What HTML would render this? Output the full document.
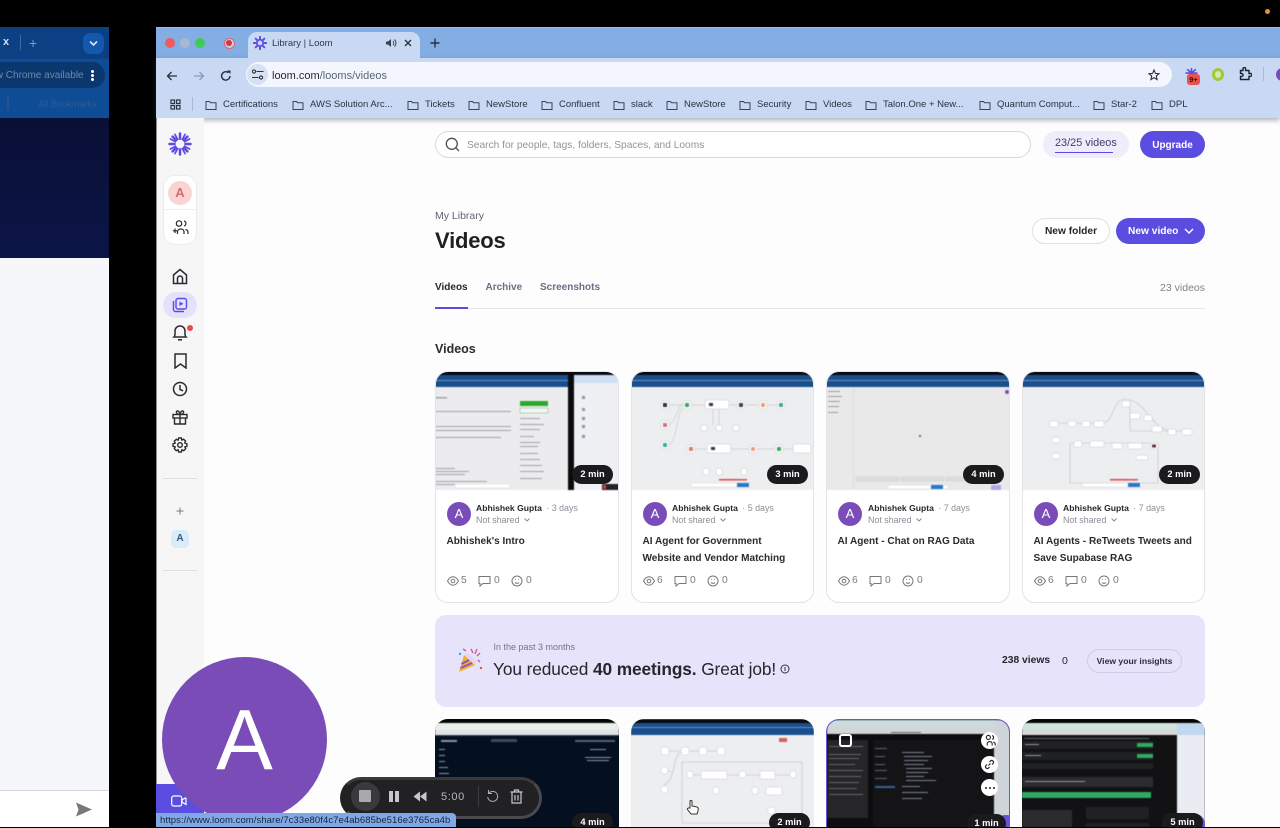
<!DOCTYPE html>
<html><head><meta charset="utf-8"><style>
*{box-sizing:border-box}
html,body{margin:0;padding:0;width:1280px;height:827px;overflow:hidden;background:#000;font-family:"Liberation Sans",sans-serif}
.a,.t,svg.i{position:absolute}
.t{white-space:nowrap;line-height:1}
.bm{position:absolute;top:99px;height:12px;font-size:9.5px;line-height:12px;color:#2a3242;padding-left:18px;white-space:nowrap}
.bm svg{position:absolute;left:0;top:0}
.card{position:absolute;top:371px;width:184px;height:232px;background:#fff;border:1px solid #e3e3e8;border-radius:13px;overflow:hidden}
.th{position:absolute;left:-1px;top:-1px;width:184px;height:119px;overflow:hidden;display:block;filter:blur(.45px)}
.blur{filter:blur(.45px);display:block}
.dur{position:absolute;background:#1b1b1e;color:#fff;font-size:9.3px;font-weight:bold;border-radius:10px;height:19px;line-height:19px;text-align:center;width:41px}
.av{position:absolute;width:24px;height:24px;border-radius:50%;background:#7a4cb8;color:#fff;font-size:13px;line-height:24px;text-align:center}
.nm{position:absolute;font-size:8.6px;font-weight:bold;color:#27272c;white-space:nowrap}
.nm span{font-weight:normal;font-size:8.9px;color:#8d8d98;margin-left:2px}
.ns{position:absolute;font-size:8.9px;color:#8b8b96;white-space:nowrap}
.ns svg{margin-left:5px;vertical-align:1px}
.ti{position:absolute;font-size:10.05px;font-weight:bold;color:#2a2a30;line-height:16.5px;white-space:nowrap}
.st{position:absolute;font-size:10.3px;color:#7b7b86}
</style></head><body>

<!-- left window -->
<div class="a" style="left:0;top:27px;width:109px;height:800px;background:#f5f7fb;overflow:hidden">
<div class="a" style="left:0;top:0;width:109px;height:32px;background:#0b4184"></div>
<div class="a" style="left:0;top:32px;width:109px;height:59px;background:#0e4c95"></div>
<div class="a" style="left:0;top:91px;width:109px;height:140px;background:linear-gradient(180deg,#0a0f36,#0b1545)"></div>
<div class="a" style="left:0;top:35px;width:105px;height:26px;background:#0b376f;border-radius:0 13px 13px 0"></div>
<div class="t" style="left:-17px;top:43.500px;font-size:10px;color:#73899f">New Chrome available</div>
<div class="a" style="left:91px;top:43px;width:3px;height:3px;background:#fff;border-radius:50%;box-shadow:0 4px 0 #fff,0 8px 0 #fff"></div>
<div class="a" style="left:83px;top:6px;width:21px;height:21px;background:#1258ac;border-radius:7px"></div>
<svg class="i" style="left:89px;top:13px" width="9" height="7"><path d="M1 1.500l3.500 3.500L8 1.500" fill="none" stroke="#dfe8f5" stroke-width="1.600"/></svg>
<div class="t" style="left:3px;top:10px;font-size:11px;font-weight:bold;color:#d5dfee">x</div>
<div class="a" style="left:20px;top:8px;width:1px;height:15px;background:#3b6aa5"></div>
<div class="t" style="left:29px;top:9px;font-size:14px;color:#7f9cc2">+</div>
<div class="a" style="left:7px;top:69px;width:2px;height:14px;background:#24558f"></div>
<div class="t" style="left:38px;top:73px;font-size:9.2px;color:#2a5c98">All Bookmarks</div>
<div class="a" style="left:0;top:763px;width:109px;height:37px;background:#fff;border-top:1px solid #d6d6d8"></div>
<svg class="i" style="left:75px;top:775px" width="18" height="15"><path d="M1 0.500L17 7.500L1 14.500L3.500 7.500Z" fill="#77797c"/></svg>
</div>

<!-- orange dot -->
<div class="a" style="left:1265px;top:9px;width:5px;height:5px;background:#e8912d;border-radius:50%"></div>

<!-- main window -->
<div class="a" style="left:156px;top:27px;width:1124px;height:800px;background:#fdfdfe;border-left:1px solid #8a8a8a"></div>
<div class="a" style="left:156px;top:27px;width:1124px;height:31px;background:#84ade4;border-top:1px solid #9dbce6"></div>
<div class="a" style="left:156px;top:58px;width:1124px;height:60px;background:#c9d9f3;box-shadow:0 2px 5px rgba(60,70,90,.45)"></div>

<div class="a" style="left:165px;top:38px;width:10px;height:10px;border-radius:50%;background:#ee5a5e"></div>
<div class="a" style="left:180px;top:38px;width:10px;height:10px;border-radius:50%;background:#a9b8ce"></div>
<div class="a" style="left:195px;top:38px;width:10px;height:10px;border-radius:50%;background:#3ecb5a"></div>
<div class="a" style="left:223.500px;top:37.500px;width:11px;height:11px;border-radius:50%;border:1.500px solid #e0626f;background:#c9d0e8"></div>
<div class="a" style="left:226px;top:40px;width:6px;height:6px;border-radius:50%;background:#d8323f"></div>

<!-- tab -->
<div class="a" style="left:248px;top:32px;width:172px;height:30px;background:#c9d9f3;border-radius:9px 9px 0 0"></div>
<svg class="i" style="left:253px;top:36px" width="14" height="14" viewBox="0 0 24 24"><g stroke="#5d4fe0" stroke-width="3.400" stroke-linecap="round"><path d="M12 1.500V22.500M1.500 12H22.500M4.600 4.600L19.400 19.400M19.400 4.600L4.600 19.400"/></g><circle cx="12" cy="12" r="7" fill="#5d4fe0"/><circle cx="12" cy="12" r="4" fill="#c9d9f3"/></svg>
<div class="t" style="left:272px;top:38.500px;font-size:9.500px;color:#333a48">Library | Loom</div>
<svg class="i" style="left:385px;top:37px" width="12" height="12" viewBox="0 0 12 12"><path d="M1 4.500H3L6 2V10L3 7.500H1Z" fill="#3b4250"/><path d="M8 4a3 3 0 0 1 0 4M9.500 2.500a5 5 0 0 1 0 7" fill="none" stroke="#3b4250"/></svg>
<svg class="i" style="left:404px;top:39px" width="8" height="8"><path d="M1 1L7 7M7 1L1 7" stroke="#2c3340" stroke-width="1.400"/></svg>
<svg class="i" style="left:430px;top:37.500px" width="10" height="10"><path d="M5 0.500V9.500M0.500 5H9.500" stroke="#283044" stroke-width="1.400"/></svg>

<!-- toolbar -->
<svg class="i" style="left:166px;top:69.500px" width="12" height="12"><path d="M11 6H1.500M5.500 2L1.500 6L5.500 10" fill="none" stroke="#2a2f3a" stroke-width="1.300"/></svg>
<svg class="i" style="left:193px;top:69.500px" width="12" height="12"><path d="M1 6H10.500M6.500 2L10.500 6L6.500 10" fill="none" stroke="#8c9ab3" stroke-width="1.300"/></svg>
<svg class="i" style="left:220px;top:69.500px" width="12" height="12"><path d="M10 6A4.200 4.200 0 1 1 8.500 2.700" fill="none" stroke="#2a2f3a" stroke-width="1.400"/><path d="M7 0.500H10.500V4Z" fill="#2a2f3a"/></svg>
<div class="a" style="left:246px;top:62px;width:926px;height:25px;border-radius:13px;background:#f3f6fc"></div>
<div class="a" style="left:247px;top:64px;width:21px;height:21px;border-radius:50%;background:#d6e1f3"></div>
<svg class="i" style="left:251px;top:69px" width="13" height="11"><g fill="none" stroke="#2c3340" stroke-width="1.100"><circle cx="3" cy="2.500" r="1.600"/><path d="M5.500 2.500H12.500M1 8.500H7.500"/><circle cx="10" cy="8.500" r="1.600"/></g></svg>
<div class="t" style="left:272px;top:70.500px;font-size:11px;color:#1f2530">loom.com<span style="color:#5b6576">/looms/videos</span></div>
<svg class="i" style="left:1148px;top:69px" width="12" height="12" viewBox="0 0 12 12"><path d="M6 1L7.400 4.400L11 4.700L8.300 7L9.100 10.600L6 8.700L2.900 10.600L3.700 7L1 4.700L4.600 4.400Z" fill="none" stroke="#2a2f3a" stroke-width="1.100"/></svg>
<svg class="i" style="left:1185px;top:68px" width="13" height="10" viewBox="0 0 24 18"><g stroke="#5d4fe0" stroke-width="3" stroke-linecap="round"><path d="M12 1V17M2 9H22M5 3L19 15M19 3L5 15"/></g></svg>
<div class="a" style="left:1187px;top:74px;width:13px;height:11px;border-radius:3px;background:#e8534c;color:#2b0f10;font-size:7.500px;font-weight:bold;line-height:11px;text-align:center">9+</div>
<div class="a" style="left:1212px;top:68px;width:12px;height:13px;border-radius:50%;border:3px solid #a3c93a;background:#d7e8b4"></div>
<svg class="i" style="left:1238px;top:67px" width="14" height="14" viewBox="0 0 14 14"><path d="M2.500 3.500H5V1.800A1.300 1.300 0 0 1 7.600 1.800V3.500H11V6.500H12.500A1.400 1.400 0 0 1 12.500 9.300H11V12.500H2.500V9.500H3.600A1.500 1.500 0 0 0 3.600 6.500H2.500Z" fill="none" stroke="#1d222c" stroke-width="1.400"/></svg>
<div class="a" style="left:1263px;top:67px;width:1px;height:14px;background:#a7bad8"></div>
<div class="a" style="left:1276px;top:68px;width:13px;height:13px;border-radius:50%;background:#7a4cb8"></div>

<!-- bookmarks -->
<svg class="i" style="left:170px;top:99px" width="11" height="11"><g fill="none" stroke="#2f3644" stroke-width="1.200"><rect x="1" y="1" width="3.500" height="3.500"/><rect x="6.500" y="1" width="3.500" height="3.500"/><rect x="1" y="6.500" width="3.500" height="3.500"/><rect x="6.500" y="6.500" width="3.500" height="3.500"/></g></svg>
<div class="a" style="left:192px;top:97px;width:1px;height:14px;background:#a7bad8"></div>
<div class="bm" style="left:205px"><svg width="12" height="12"><path d="M1 2.500H4.500L5.500 3.700H11V10.500H1Z" fill="none" stroke="#3c4453"/></svg>Certifications</div>
<div class="bm" style="left:292px"><svg width="12" height="12"><path d="M1 2.500H4.500L5.500 3.700H11V10.500H1Z" fill="none" stroke="#3c4453"/></svg>AWS Solution Arc...</div>
<div class="bm" style="left:407px"><svg width="12" height="12"><path d="M1 2.500H4.500L5.500 3.700H11V10.500H1Z" fill="none" stroke="#3c4453"/></svg>Tickets</div>
<div class="bm" style="left:468px"><svg width="12" height="12"><path d="M1 2.500H4.500L5.500 3.700H11V10.500H1Z" fill="none" stroke="#3c4453"/></svg>NewStore</div>
<div class="bm" style="left:541px"><svg width="12" height="12"><path d="M1 2.500H4.500L5.500 3.700H11V10.500H1Z" fill="none" stroke="#3c4453"/></svg>Confluent</div>
<div class="bm" style="left:613px"><svg width="12" height="12"><path d="M1 2.500H4.500L5.500 3.700H11V10.500H1Z" fill="none" stroke="#3c4453"/></svg>slack</div>
<div class="bm" style="left:666px"><svg width="12" height="12"><path d="M1 2.500H4.500L5.500 3.700H11V10.500H1Z" fill="none" stroke="#3c4453"/></svg>NewStore</div>
<div class="bm" style="left:739px"><svg width="12" height="12"><path d="M1 2.500H4.500L5.500 3.700H11V10.500H1Z" fill="none" stroke="#3c4453"/></svg>Security</div>
<div class="bm" style="left:805px"><svg width="12" height="12"><path d="M1 2.500H4.500L5.500 3.700H11V10.500H1Z" fill="none" stroke="#3c4453"/></svg>Videos</div>
<div class="bm" style="left:865px"><svg width="12" height="12"><path d="M1 2.500H4.500L5.500 3.700H11V10.500H1Z" fill="none" stroke="#3c4453"/></svg>Talon.One + New...</div>
<div class="bm" style="left:979px"><svg width="12" height="12"><path d="M1 2.500H4.500L5.500 3.700H11V10.500H1Z" fill="none" stroke="#3c4453"/></svg>Quantum Comput...</div>
<div class="bm" style="left:1093px"><svg width="12" height="12"><path d="M1 2.500H4.500L5.500 3.700H11V10.500H1Z" fill="none" stroke="#3c4453"/></svg>Star-2</div>
<div class="bm" style="left:1151px"><svg width="12" height="12"><path d="M1 2.500H4.500L5.500 3.700H11V10.500H1Z" fill="none" stroke="#3c4453"/></svg>DPL</div>

<!-- sidebar -->
<div class="a" style="left:157px;top:118px;width:47px;height:709px;background:#f6f6f7"></div>
<svg class="i" style="left:168px;top:132px" width="24" height="24" viewBox="0 0 24 24"><g stroke="#5a4ae3" stroke-width="2.500" stroke-linecap="round"><path d="M12 1.500V22.500M1.500 12H22.500M4.600 4.600L19.400 19.400M19.400 4.600L4.600 19.400"/><path d="M7 2.500L17 21.500M17 2.500L7 21.500M2.500 7L21.500 17M21.500 7L2.500 17" stroke-width="1.800"/></g><circle cx="12" cy="12" r="4.400" fill="#f6f6f7"/></svg>
<div class="a" style="left:163px;top:175px;width:34px;height:70px;background:#fff;border:1px solid #ececef;border-radius:12px"></div>
<div class="a" style="left:164px;top:209px;width:32px;height:1px;background:#eee"></div>
<div class="a" style="left:168px;top:181px;width:24px;height:24px;border-radius:50%;background:#f8d4d2;color:#d86a68;font-size:13px;font-weight:bold;line-height:24px;text-align:center">A</div>
<svg class="i" style="left:172px;top:219px" width="17" height="17" viewBox="0 0 17 17"><g fill="none" stroke="#2a2a30" stroke-width="1.200"><circle cx="7" cy="4.500" r="2.700"/><path d="M12 2A2.600 2.600 0 0 1 12 7"/><path d="M5.500 15V12.500A3 3 0 0 1 8.500 10H9A3 3 0 0 1 12 12.500V15"/><path d="M13.500 10.500A3 3 0 0 1 16 13V15"/><path d="M3 9.500V14M0.800 11.800H5.200"/></g></svg>
<svg class="i" style="left:172px;top:268px" width="16" height="17" viewBox="0 0 16 17"><path d="M1.500 7L8 1.500L14.500 7V15.500H1.500ZM5.500 15.500V10.500A2.500 2.500 0 0 1 10.500 10.500V15.500" fill="none" stroke="#2a2a30" stroke-width="1.500"/></svg>
<div class="a" style="left:163px;top:292px;width:34px;height:26px;border-radius:13px;background:#e4e1fa"></div>
<svg class="i" style="left:172px;top:297px" width="16" height="16" viewBox="0 0 16 16"><g fill="none" stroke="#5a4ae3" stroke-width="1.400"><rect x="4" y="1.500" width="10.500" height="10.500" rx="2"/><path d="M1.500 4V12.500A2 2 0 0 0 3.500 14.500H12"/></g><path d="M7.500 4.500L11.500 6.800L7.500 9Z" fill="#5a4ae3"/></svg>
<svg class="i" style="left:172px;top:324px" width="16" height="18" viewBox="0 0 16 18"><path d="M2 13C3.500 11.500 3 9 3 7A5 5 0 0 1 13 7C13 9 12.500 11.500 14 13ZM6 15.800H10" fill="none" stroke="#2a2a30" stroke-width="1.500"/></svg>
<div class="a" style="left:187px;top:325px;width:6px;height:6px;border-radius:50%;background:#ec4a4a"></div>
<svg class="i" style="left:174px;top:353px" width="13" height="16" viewBox="0 0 13 16"><path d="M1 1H12V15L6.500 11L1 15Z" fill="none" stroke="#2a2a30" stroke-width="1.500"/></svg>
<svg class="i" style="left:172px;top:381px" width="16" height="16" viewBox="0 0 16 16"><circle cx="8" cy="8" r="6.500" fill="none" stroke="#2a2a30" stroke-width="1.500"/><path d="M8 4V8.500L11 9.800" fill="none" stroke="#2a2a30" stroke-width="1.500"/></svg>
<svg class="i" style="left:172px;top:410px" width="16" height="15" viewBox="0 0 16 15"><g fill="none" stroke="#2a2a30" stroke-width="1.400"><rect x="1" y="4.500" width="14" height="3.500"/><path d="M2.500 8V14H13.500V8M8 4.500V14M8 4.500C4 4.500 3.500 1 5.500 1S8 4.500 8 4.500C8 4.500 8.500 1 10.500 1S12 4.500 8 4.500"/></g></svg>
<svg class="i" style="left:172px;top:437px" width="16" height="16" viewBox="0 0 16 16"><g fill="none" stroke="#2a2a30" stroke-width="1.400"><circle cx="8" cy="8" r="2.300"/><path d="M6.700 1H9.300L9.800 3L11.600 2.200L13.600 4.200L12.700 6L14.900 6.700V9.300L12.900 9.900L13.700 11.700L11.700 13.700L9.900 12.800L9.300 15H6.700L6.100 12.900L4.300 13.700L2.300 11.700L3.200 9.900L1.100 9.300V6.700L3.200 6.100L2.300 4.300L4.300 2.300L6.100 3.100Z"/></g></svg>
<div class="a" style="left:163px;top:478px;width:34px;height:1px;background:#e0e0e3"></div>
<svg class="i" style="left:176px;top:507px" width="8" height="8"><path d="M4 0.500V7.500M0.500 4H7.500" stroke="#77777f" stroke-width="1"/></svg>
<div class="a" style="left:171px;top:530px;width:18px;height:18px;border-radius:5px;background:#d9ecfb;color:#3e5a72;font-size:10px;font-weight:bold;line-height:18px;text-align:center">A</div>
<div class="a" style="left:163px;top:570px;width:34px;height:1px;background:#e0e0e3"></div>

<!-- header -->
<div class="a" style="left:435px;top:131px;width:596px;height:27px;background:#fff;border:1px solid #d8d8dd;border-radius:14px"></div>
<svg class="i" style="left:445px;top:137px" width="15" height="15"><g fill="none" stroke="#4b4b55" stroke-width="1.300"><circle cx="6.800" cy="6.800" r="5.500"/><path d="M10.800 10.800L14 14"/></g></svg>
<div class="t" style="left:467px;top:141px;font-size:10.200px;color:#93939d">Search for people, tags, folders, Spaces, and Looms</div>
<div class="a" style="left:1043px;top:131px;width:86px;height:27px;background:#efedfb;border-radius:14px"></div>
<div class="t" style="left:1055px;top:138px;font-size:10.900px;color:#3f3c6a">23/25 videos</div>
<div class="a" style="left:1055px;top:151.500px;width:58px;height:1px;background:#5a4ae3"></div>
<div class="a" style="left:1140px;top:131px;width:65px;height:27px;background:#5b4de0;border-radius:14px;color:#fff;font-size:10px;font-weight:bold;line-height:30px;text-align:center">Upgrade</div>

<div class="t" style="left:435px;top:210.500px;font-size:10.500px;color:#62627a">My Library</div>
<div class="t" style="left:435px;top:230px;font-size:22px;font-weight:bold;color:#1f1f24;letter-spacing:-.2px">Videos</div>
<div class="a" style="left:1032px;top:218px;width:78px;height:26px;background:#fff;border:1px solid #dfdfe5;border-radius:13px;color:#26262c;font-size:10.200px;font-weight:bold;line-height:25.500px;text-align:center">New folder</div>
<div class="a" style="left:1116px;top:218px;width:89px;height:26px;background:#5b4de0;border-radius:13px;color:#fff;font-size:10.200px;font-weight:bold;line-height:27.500px;padding-left:12px">New video</div>
<svg class="i" style="left:1184px;top:228px" width="10" height="7"><path d="M1 1L5 5L9 1" fill="none" stroke="#fff" stroke-width="1.400"/></svg>

<div class="t" style="left:435px;top:283px;font-size:10px;font-weight:bold;color:#27272c">Videos</div>
<div class="t" style="left:485.500px;top:283px;font-size:10px;font-weight:bold;color:#6c6c85">Archive</div>
<div class="t" style="left:540px;top:283px;font-size:10px;font-weight:bold;color:#6c6c85">Screenshots</div>
<div class="t" style="right:75px;top:282.500px;font-size:10.500px;color:#82828d">23 videos</div>
<div class="a" style="left:435px;top:308px;width:770px;height:1px;background:#e6e6ea"></div>
<div class="a" style="left:435px;top:307px;width:33px;height:2px;background:#5b4de0"></div>
<div class="t" style="left:435px;top:342.500px;font-size:12.500px;font-weight:bold;color:#2a2a30">Videos</div>

<!-- card 1 -->
<div class="card" style="left:435px">
<svg class="th" viewBox="0 0 184 119"><rect width="184" height="119" fill="#ececef"/><rect width="184" height="5" fill="#0b0c10"/><rect y="4" width="184" height="12" fill="#1a4f8e"/><rect y="9" width="133" height="1" fill="#6c90bb"/><rect x="133" width="6" height="119" fill="#0b0b0b"/><rect x="139" y="4" width="45" height="115" fill="#eef0f4"/><rect x="139" y="4" width="45" height="8" fill="#cfe0f4"/><rect x="85" y="30" width="28" height="5" fill="#2aa92e"/><rect x="85" y="37" width="28" height="5" fill="#f5f5f5" stroke="#7bb17d" stroke-width=".5"/><g fill="#9fa2a8"><rect y="26" width="12" height="1.500"/><rect y="40" width="76" height="1"/><rect y="55" width="76" height="1"/><rect y="59" width="76" height="1"/><rect y="66" width="66" height="1"/><rect y="97" width="20" height="1"/><rect y="100" width="34" height="1"/><rect y="103" width="30" height="1"/><rect y="110" width="52" height="1"/><rect y="113" width="38" height="1"/><rect x="85" y="47" width="20" height="1"/><rect x="85" y="53" width="24" height="1"/><rect x="85" y="58" width="20" height="1"/><rect x="85" y="65" width="14" height="1"/><rect x="85" y="71" width="20" height="1"/><rect x="85" y="75" width="18" height="1"/><rect x="85" y="82" width="18" height="1"/><rect x="85" y="88" width="20" height="1"/><rect x="85" y="94" width="22" height="1"/><rect x="85" y="100" width="24" height="1"/><rect x="85" y="107" width="22" height="1"/></g><g fill="#8f96a5"><rect x="147" y="25" width="3" height="3"/><rect x="147" y="37" width="3" height="3"/><rect x="147" y="46" width="3" height="3"/><rect x="147" y="54" width="3" height="3"/><rect x="147" y="64" width="3" height="3"/></g><rect x="167" y="113" width="17" height="6" fill="#20232b"/><rect x="168" y="114" width="3" height="4" fill="#e0393a"/><rect x="20" y="113" width="55" height="4" fill="#fff" stroke="#ccc" stroke-width=".4"/></svg>
<div class="dur" style="left:136px;top:93px">2 min</div>
<div class="av" style="left:11px;top:130px">A</div>
<div class="nm" style="left:40px;top:131px">Abhishek Gupta <span>· 3 days</span></div>
<div class="ns" style="left:40px;top:143px">Not shared<svg width="6" height="4"><path d="M.5 .5L3 3L5.500 .5" fill="none" stroke="#8b8b96"/></svg></div>
<div class="ti" style="left:10.500px;top:162px">Abhishek's Intro</div>
<svg class="i" style="left:11px;top:202px" width="110" height="14" viewBox="0 0 110 14"><g fill="none" stroke="#77777f" stroke-width="1"><path d="M0.500 7C2.500 3.500 4.500 2.800 6 2.800S9.500 3.500 11.500 7C9.500 10.500 7.500 11.200 6 11.200S2.500 10.500 .5 7Z"/><circle cx="6" cy="7" r="1.800"/><path d="M32 2.500H43V9.500H36L33 12V9.500H32Z"/><circle cx="70" cy="7" r="5"/><path d="M68 8.500C69 9.700 71 9.700 72 8.500M68 5.500H68.800M71.200 5.500H72"/></g></svg>
<div class="st" style="left:25px;top:203px">5</div><div class="st" style="left:58px;top:203px">0</div><div class="st" style="left:90px;top:203px">0</div>
</div>

<!-- card 2 -->
<div class="card" style="left:631px;width:183px">
<svg class="th" viewBox="0 0 184 119"><rect width="184" height="119" fill="#edeef0"/><rect width="184" height="5" fill="#0b0c10"/><rect y="4" width="184" height="12" fill="#1a4f8e"/><rect y="9" width="184" height="1" fill="#6c90bb"/><g fill="#fff" stroke="#c4c6cc" stroke-width=".5"><rect x="30" y="30" width="8" height="8" rx="2"/><rect x="52" y="30" width="8" height="8" rx="2"/><rect x="74" y="29" width="24" height="9" rx="2"/><rect x="106" y="30" width="8" height="8" rx="2"/><rect x="128" y="30" width="8" height="8" rx="2"/><rect x="146" y="30" width="8" height="8" rx="2"/><rect x="30" y="50" width="8" height="8" rx="2"/><rect x="30" y="70" width="8" height="8" rx="2"/><rect x="56" y="74" width="8" height="8" rx="2"/><rect x="76" y="73" width="24" height="9" rx="2"/><rect x="118" y="74" width="8" height="8" rx="2"/><rect x="144" y="74" width="8" height="8" rx="2"/><rect x="162" y="73" width="18" height="9" rx="2"/><rect x="70" y="54" width="6" height="6" rx="2"/><rect x="85" y="54" width="6" height="6" rx="2"/><rect x="102" y="54" width="6" height="6" rx="2"/><rect x="72" y="97" width="6" height="7" rx="2"/><rect x="85" y="97" width="6" height="7" rx="2"/><rect x="110" y="97" width="6" height="7" rx="2"/></g><g fill="none" stroke="#b9bbc2" stroke-width=".5"><path d="M38 34H52M60 34H74M98 34H106M114 34H128M136 34H146M38 54C45 50 46 38 50 34M38 74C46 70 46 42 52 36M64 78H76M100 78H118M126 78H144M152 78H162M82 38V54M88 38V54"/></g><g><rect x="32" y="32" width="4" height="4" fill="#333"/><rect x="54" y="32" width="4" height="4" fill="#3aa760"/><rect x="78" y="32" width="4" height="3" fill="#333"/><rect x="108" y="32" width="4" height="4" fill="#444"/><rect x="130" y="32" width="4" height="4" fill="#e5a07a"/><rect x="148" y="32" width="4" height="4" fill="#4ba783"/><rect x="32" y="52" width="4" height="4" fill="#c77"/><rect x="32" y="72" width="4" height="4" fill="#3aa7a0"/><rect x="58" y="76" width="4" height="4" fill="#e27a6a"/><rect x="80" y="76" width="4" height="3" fill="#333"/><rect x="120" y="76" width="4" height="4" fill="#e5a07a"/><rect x="146" y="76" width="4" height="4" fill="#3aa760"/></g><rect x="60" y="112" width="60" height="4" fill="#fff" stroke="#ccc" stroke-width=".4"/><rect x="88" y="108" width="18" height="1.500" fill="#d44"/><rect x="106" y="108" width="10" height="1.500" fill="#c55"/><rect x="106" y="112" width="12" height="4" fill="#2a76c8"/></svg>
<div class="dur" style="left:135px;top:93px">3 min</div>
<div class="av" style="left:11px;top:130px">A</div>
<div class="nm" style="left:40px;top:131px">Abhishek Gupta <span>· 5 days</span></div>
<div class="ns" style="left:40px;top:143px">Not shared<svg width="6" height="4"><path d="M.5 .5L3 3L5.500 .5" fill="none" stroke="#8b8b96"/></svg></div>
<div class="ti" style="left:10.500px;top:162px">AI Agent for Government<br>Website and Vendor Matching</div>
<svg class="i" style="left:11px;top:202px" width="110" height="14" viewBox="0 0 110 14"><g fill="none" stroke="#77777f" stroke-width="1"><path d="M0.500 7C2.500 3.500 4.500 2.800 6 2.800S9.500 3.500 11.500 7C9.500 10.500 7.500 11.200 6 11.200S2.500 10.500 .5 7Z"/><circle cx="6" cy="7" r="1.800"/><path d="M32 2.500H43V9.500H36L33 12V9.500H32Z"/><circle cx="70" cy="7" r="5"/><path d="M68 8.500C69 9.700 71 9.700 72 8.500M68 5.500H68.800M71.200 5.500H72"/></g></svg>
<div class="st" style="left:25px;top:203px">6</div><div class="st" style="left:58px;top:203px">0</div><div class="st" style="left:90px;top:203px">0</div>
</div>

<!-- card 3 -->
<div class="card" style="left:826px">
<svg class="th" viewBox="0 0 184 119"><rect width="184" height="119" fill="#e9e9ea"/><rect width="184" height="5" fill="#0b0c10"/><rect y="4" width="184" height="12" fill="#1a4f8e"/><rect y="9" width="184" height="1" fill="#6c90bb"/><rect x="27" y="17" width="1" height="102" fill="#dcdcde"/><g fill="#9a9ca2"><rect x="2" y="20" width="12" height="1"/><rect x="2" y="25" width="14" height="1"/><rect x="2" y="30" width="12" height="1"/><rect x="2" y="35" width="11" height="1"/><rect x="2" y="41" width="10" height="1"/></g><circle cx="94" cy="65" r="1.200" fill="#777"/><g fill="#dcdcde" stroke="#c5c5c8" stroke-width=".4"><rect x="30" y="106" width="43" height="4"/><rect x="75" y="106" width="43" height="4"/><rect x="120" y="106" width="40" height="4"/></g><rect x="62" y="114" width="60" height="4" fill="#fff" stroke="#ccc" stroke-width=".4"/><rect x="105" y="114" width="12" height="4" fill="#2a76c8"/><rect x="165" y="114" width="10" height="5" fill="#b6a6e8"/><circle cx="181" cy="21" r="2" fill="#7a4cb8"/></svg>
<div class="dur" style="left:136px;top:93px">4 min</div>
<div class="av" style="left:11px;top:130px">A</div>
<div class="nm" style="left:41px;top:131px">Abhishek Gupta <span>· 7 days</span></div>
<div class="ns" style="left:41px;top:143px">Not shared<svg width="6" height="4"><path d="M.5 .5L3 3L5.500 .5" fill="none" stroke="#8b8b96"/></svg></div>
<div class="ti" style="left:10.500px;top:162px">AI Agent - Chat on RAG Data</div>
<svg class="i" style="left:11px;top:202px" width="110" height="14" viewBox="0 0 110 14"><g fill="none" stroke="#77777f" stroke-width="1"><path d="M0.500 7C2.500 3.500 4.500 2.800 6 2.800S9.500 3.500 11.500 7C9.500 10.500 7.500 11.200 6 11.200S2.500 10.500 .5 7Z"/><circle cx="6" cy="7" r="1.800"/><path d="M32 2.500H43V9.500H36L33 12V9.500H32Z"/><circle cx="70" cy="7" r="5"/><path d="M68 8.500C69 9.700 71 9.700 72 8.500M68 5.500H68.800M71.200 5.500H72"/></g></svg>
<div class="st" style="left:25px;top:203px">6</div><div class="st" style="left:58px;top:203px">0</div><div class="st" style="left:90px;top:203px">0</div>
</div>

<!-- card 4 -->
<div class="card" style="left:1022px;width:183px">
<svg class="th" viewBox="0 0 184 119"><rect width="184" height="119" fill="#edeef0"/><rect width="184" height="5" fill="#0b0c10"/><rect y="4" width="184" height="12" fill="#1a4f8e"/><rect y="9" width="184" height="1" fill="#6c90bb"/><g fill="none" stroke="#bcbec4" stroke-width=".6"><path d="M30 52H80C92 52 90 30 102 28C125 28 128 60 152 60H168M48 72H130M48 72V112H136V72"/><path d="M108 30V60H150"/></g><g fill="#fff" stroke="#c4c6cc" stroke-width=".5"><rect x="28" y="50" width="8" height="6" rx="1"/><rect x="46" y="50" width="8" height="6" rx="1"/><rect x="60" y="50" width="8" height="6" rx="1"/><rect x="72" y="50" width="10" height="6" rx="1"/><rect x="30" y="66" width="8" height="6" rx="1"/><rect x="30" y="82" width="8" height="6" rx="1"/><rect x="100" y="30" width="8" height="6" rx="1"/><rect x="108" y="42" width="10" height="6" rx="1"/><rect x="122" y="44" width="8" height="6" rx="1"/><rect x="130" y="55" width="10" height="6" rx="1"/><rect x="146" y="58" width="8" height="6" rx="1"/><rect x="160" y="58" width="10" height="6" rx="1"/><rect x="52" y="70" width="8" height="6" rx="1"/><rect x="68" y="70" width="14" height="6" rx="1"/><rect x="90" y="72" width="10" height="6" rx="1"/><rect x="106" y="72" width="14" height="6" rx="1"/><rect x="128" y="72" width="8" height="6" rx="1"/><rect x="114" y="84" width="12" height="5" rx="2"/></g><rect x="60" y="112" width="60" height="4" fill="#fff" stroke="#ccc" stroke-width=".4"/><rect x="88" y="108" width="18" height="1.500" fill="#d44"/><rect x="106" y="108" width="10" height="1.500" fill="#c55"/><rect x="106" y="112" width="12" height="4" fill="#2a76c8"/><rect x="130" y="73.500" width="4" height="3" fill="#633"/></svg>
<div class="dur" style="left:136px;top:93px">2 min</div>
<div class="av" style="left:11px;top:130px">A</div>
<div class="nm" style="left:40px;top:131px">Abhishek Gupta <span>· 7 days</span></div>
<div class="ns" style="left:40px;top:143px">Not shared<svg width="6" height="4"><path d="M.5 .5L3 3L5.500 .5" fill="none" stroke="#8b8b96"/></svg></div>
<div class="ti" style="left:10.500px;top:162px">AI Agents - ReTweets Tweets and<br>Save Supabase RAG</div>
<svg class="i" style="left:11px;top:202px" width="110" height="14" viewBox="0 0 110 14"><g fill="none" stroke="#77777f" stroke-width="1"><path d="M0.500 7C2.500 3.500 4.500 2.800 6 2.800S9.500 3.500 11.500 7C9.500 10.500 7.500 11.200 6 11.200S2.500 10.500 .5 7Z"/><circle cx="6" cy="7" r="1.800"/><path d="M32 2.500H43V9.500H36L33 12V9.500H32Z"/><circle cx="70" cy="7" r="5"/><path d="M68 8.500C69 9.700 71 9.700 72 8.500M68 5.500H68.800M71.200 5.500H72"/></g></svg>
<div class="st" style="left:25px;top:203px">6</div><div class="st" style="left:58px;top:203px">0</div><div class="st" style="left:90px;top:203px">0</div>
</div>

<!-- banner -->
<div class="a" style="left:435px;top:615px;width:770px;height:92px;background:#e6e3fa;border-radius:11px"></div>
<svg class="i" style="left:457px;top:646px" width="26" height="28" viewBox="0 0 26 28"><path d="M2 26L7 9L18 19Z" fill="#f0b02c"/><path d="M4.500 18L12 14M3.500 22L15 17" stroke="#8a55c9" stroke-width="2"/><path d="M7 9L18 19L20 15L11 7Z" fill="#e9c9f0" opacity=".6"/><path d="M14 3L16 7M20 3L18 8M23 7L20 10M6 3L9 5M23 16L21 14" stroke="#d8608f" stroke-width="1.500"/><circle cx="3" cy="8" r="1.200" fill="#4a9be0"/><circle cx="24" cy="22" r="1.200" fill="#e8554d"/></svg>
<div class="t" style="left:493.500px;top:643px;font-size:9px;color:#73738a">In the past 3 months</div>
<div class="t" style="left:493px;top:660.500px;font-size:17.300px;color:#26262c;letter-spacing:-.1px">You reduced <b>40 meetings.</b> Great job!</div>
<svg class="i" style="left:780px;top:664px" width="10" height="10"><circle cx="5" cy="5" r="4" fill="none" stroke="#33333a"/><path d="M5 3V7" stroke="#33333a"/></svg>
<div class="t" style="left:1002px;top:655.500px;font-size:10.300px;font-weight:bold;color:#26262c">238 views</div>
<div class="t" style="left:1062px;top:655.500px;font-size:10.500px;color:#26262c">0</div>
<div class="a" style="left:1087px;top:649px;width:95px;height:24px;border:1px solid #d0cde8;border-radius:12px;color:#2e2e36;font-size:8.600px;font-weight:bold;line-height:22px;text-align:center">View your insights</div>

<!-- row 2 thumbs -->
<div class="a" style="left:435px;top:719px;width:184px;height:108px;border-radius:13px 13px 0 0;overflow:hidden;background:#04101f">
<svg class="blur" width="184" height="108"><rect width="184" height="4" fill="#050505"/><rect y="4" width="184" height="7" fill="#e7f0ea"/><rect y="11" width="184" height="5" fill="#dfe3e6"/><rect x="0" y="16" width="184" height="1" fill="#33435e"/><g fill="#8b96a8"><rect x="6" y="21" width="16" height="2"/><rect x="56" y="20" width="26" height="3" fill="#3a4a60"/><rect x="4" y="30" width="6" height="1"/><rect x="4" y="36" width="6" height="1"/><rect x="4" y="42" width="6" height="1"/><rect x="4" y="48" width="9" height="1"/><rect x="4" y="54" width="10" height="1"/><rect x="155" y="30" width="16" height="1"/><rect x="150" y="38" width="26" height="1"/><rect x="152" y="41" width="22" height="1"/><rect x="140" y="21" width="40" height="2" fill="#52607a"/></g></svg>
<div class="dur" style="left:137px;top:94px;width:41px">4 min</div></div>

<div class="a" style="left:631px;top:719px;width:183px;height:108px;border-radius:13px 13px 0 0;overflow:hidden;background:#edeef0">
<svg class="blur" width="183" height="108"><rect width="183" height="4" fill="#0b0c10"/><rect y="4" width="183" height="12" fill="#1a4f8e"/><rect y="8" width="183" height="1" fill="#6c90bb"/><rect x="148" y="19" width="8" height="4" fill="#d8605a"/><g fill="none" stroke="#b9bbc2" stroke-width=".6"><path d="M34 32H90M52 32C40 36 46 60 33 66M51 43H171M51 43V104H171V43M33 52H40M58 56H162"/></g><g fill="#fff" stroke="#c4c6cc" stroke-width=".5"><rect x="30" y="28" width="8" height="8" rx="3"/><rect x="50" y="28" width="8" height="8" rx="3"/><rect x="68" y="28" width="8" height="8" rx="3"/><rect x="86" y="28" width="8" height="8" rx="3"/><rect x="30" y="48" width="7" height="7" rx="3"/><rect x="30" y="67" width="7" height="7" rx="3"/><rect x="56" y="52" width="6" height="7" rx="2"/><rect x="70" y="52" width="26" height="8" rx="1"/><rect x="108" y="52" width="7" height="7" rx="3"/><rect x="129" y="52" width="15" height="8" rx="1"/><rect x="159" y="52" width="6" height="7" rx="2"/><rect x="82" y="68" width="6" height="7" rx="2"/><rect x="121" y="68" width="6" height="7" rx="2"/><rect x="135" y="68" width="16" height="8" rx="2"/><rect x="137" y="88" width="7" height="7" rx="2"/></g></svg>
<svg class="i" style="left:55px;top:80px" width="14" height="16" viewBox="0 0 14 16"><path d="M4 9V2.500C4 1 6 1 6 2.500V7L11 8C12.500 8.500 12.500 10 12 12L11 15H5L1.500 10.500C1 9.500 2.500 8.500 4 9Z" fill="#fff" stroke="#333" stroke-width="1"/></svg>
<div class="dur" style="left:138px;top:94px;width:41px">2 min</div></div>

<div class="a" style="left:826px;top:719px;width:184px;height:108px;border-radius:13px 13px 0 0;overflow:hidden;background:#0d0d0f;border:1.500px solid #6c52d8;border-bottom:0">
<svg class="blur" width="184" height="108"><rect width="184" height="6" fill="#c9dde0"/><rect y="6" width="184" height="8" fill="#d3d5d6"/><rect x="167" y="0" width="17" height="108" fill="#cfd3da"/><rect x="0" y="20" width="41" height="78" fill="#262628"/><g fill="#777" opacity=".8"><rect x="2" y="26" width="34" height="1"/><rect x="2" y="34" width="32" height="1"/><rect x="2" y="38" width="30" height="1"/><rect x="2" y="44" width="26" height="1"/><rect x="2" y="50" width="34" height="1"/><rect x="2" y="56" width="32" height="1"/><rect x="2" y="62" width="30" height="1"/><rect x="2" y="68" width="28" height="1"/><rect x="2" y="74" width="34" height="1"/></g><rect x="46" y="20" width="121" height="88" fill="#141416"/><g fill="#666"><rect x="48" y="28" width="12" height="1"/><rect x="48" y="36" width="10" height="1"/><rect x="48" y="44" width="10" height="1"/><rect x="48" y="50" width="12" height="1"/><rect x="48" y="58" width="12" height="1"/><rect x="48" y="66" width="20" height="2" fill="#3a5f9a"/><rect x="64" y="12" width="30" height="1"/></g><g fill="#8d95a8" opacity=".85"><rect x="75" y="32" width="22" height="1"/><rect x="77" y="36" width="28" height="1"/><rect x="77" y="40" width="24" height="1"/><rect x="77" y="44" width="20" height="1"/><rect x="79" y="48" width="26" height="1"/><rect x="79" y="52" width="22" height="1"/><rect x="79" y="56" width="18" height="1"/><rect x="79" y="60" width="30" height="1"/><rect x="75" y="66" width="18" height="1"/><rect x="75" y="72" width="26" height="1"/><rect x="75" y="78" width="20" height="1"/></g></svg>
<div class="a" style="left:11.500px;top:13.500px;width:13px;height:13px;border:2px solid #fff;border-radius:3px"></div>
<div class="a" style="left:153.500px;top:12px;width:17px;height:17px;border-radius:50%;background:#fff"></div>
<div class="a" style="left:153.500px;top:36px;width:17px;height:17px;border-radius:50%;background:#fff"></div>
<div class="a" style="left:153.500px;top:59px;width:17px;height:17px;border-radius:50%;background:#fff"></div>
<svg class="i" style="left:155.500px;top:14px" width="13" height="13" viewBox="0 0 17 17"><g fill="none" stroke="#2a2a30" stroke-width="1.500"><circle cx="7" cy="4.500" r="2.700"/><path d="M12 2A2.600 2.600 0 0 1 12 7M5.500 15V12.500A3 3 0 0 1 8.500 10H9A3 3 0 0 1 12 12.500V15M13.500 10.500A3 3 0 0 1 16 13V15"/></g></svg>
<svg class="i" style="left:156.500px;top:39px" width="11" height="11" viewBox="0 0 11 11"><g fill="none" stroke="#2a2a30" stroke-width="1.200"><path d="M4.500 6.500L6.500 4.500M3 5.500L1.800 6.700A1.800 1.800 0 0 0 4.300 9.200L5.500 8M5.500 3L6.700 1.800A1.800 1.800 0 0 1 9.200 4.300L8 5.500"/></g></svg>
<div class="a" style="left:157.500px;top:66.500px;width:2.500px;height:2.500px;background:#222;border-radius:50%;box-shadow:4px 0 0 #222,8px 0 0 #222"></div>
<div class="a" style="left:168px;top:95px;width:22px;height:20px;background:#6c52d8;border-radius:10px"></div>
<div class="dur" style="left:140px;top:94px;width:39px">1 min</div></div>

<div class="a" style="left:1022px;top:719px;width:183px;height:108px;border-radius:13px 13px 0 0;overflow:hidden;background:#121214">
<svg class="blur" width="183" height="108"><rect width="183" height="4" fill="#050505"/><rect y="4" width="183" height="6" fill="#cfe5dc"/><rect y="10" width="155" height="6" fill="#d8dad9"/><rect x="155" y="4" width="28" height="104" fill="#e9ecf2"/><rect x="155" y="4" width="28" height="12" fill="#bfd8ef"/><g fill="#1f2123"><rect x="0" y="22" width="131" height="8"/><rect x="0" y="33" width="131" height="8"/><rect x="0" y="44" width="131" height="6"/><rect x="0" y="58" width="131" height="10" fill="#2a2c2e"/><rect x="0" y="91" width="50" height="17" fill="#2a2c2e"/><rect x="64" y="88" width="63" height="12"/><rect x="64" y="104" width="63" height="4"/></g><g fill="#2fa964"><rect x="115" y="24" width="16" height="4"/><rect x="115" y="35" width="16" height="4"/><rect x="0" y="73" width="129" height="6"/></g><g fill="#999"><rect x="3" y="25" width="14" height="1"/><rect x="3" y="36" width="16" height="1"/><rect x="3" y="62" width="60" height="1"/><rect x="2" y="19" width="125" height="1" fill="#666"/></g></svg>
<div class="a" style="left:160px;top:95px;width:23px;height:22px;background:#6c52d8;border-radius:10px"></div>
<div class="dur" style="left:140px;top:94px;width:41px">5 min</div></div>

<!-- record camera -->
<div class="a" style="left:156px;top:784px;width:48px;height:43px;background:#5b4de0;border-radius:0 10px 0 0"></div>
<svg class="i" style="left:171px;top:795px" width="16" height="12"><rect x="0.700" y="1" width="10" height="10" rx="2" fill="none" stroke="#fff" stroke-width="1.200"/><path d="M11 5L15 2.500V9.500L11 7Z" fill="none" stroke="#fff" stroke-width="1.200"/></svg>

<!-- avatar bubble -->
<div class="a" style="left:162px;top:657px;width:165px;height:165px;border-radius:50%;background:#7a4cb8;color:#fff;font-size:85px;line-height:167px;text-align:center">A</div>

<!-- control bar -->
<div class="a" style="left:340px;top:777px;width:202px;height:42px;border-radius:21px;background:#212124;border:3px solid #4a4a4e;border-left-color:#212124;border-top-color:#3a3a3d"></div>
<div class="a" style="left:351px;top:782px;width:29px;height:29px;border-radius:50%;background:#3a3a3e"></div>
<div class="a" style="left:359px;top:790px;width:12px;height:12px;background:#a9a9ad;border-radius:1px"></div>
<div class="a" style="left:389px;top:791px;width:3.500px;height:11px;background:#c6c6c9"></div>
<div class="a" style="left:395px;top:791px;width:3.500px;height:11px;background:#c6c6c9"></div>
<svg class="i" style="left:413px;top:791px" width="14" height="11"><path d="M7 0.500V10.500L0.500 5.500ZM13.500 0.500V10.500L7 5.500Z" fill="#c6c6c9"/></svg>
<div class="t" style="left:441px;top:791.500px;font-size:11px;color:#b9b9bd;letter-spacing:.6px">5:00</div>
<div class="a" style="left:478px;top:786px;width:1px;height:21px;background:#3d3d41"></div>
<svg class="i" style="left:486px;top:789px" width="13" height="14" viewBox="0 0 13 14"><path d="M3 4A5 5 0 1 1 1.700 8M2.500 1V4.500H6" fill="none" stroke="#b0b0b4" stroke-width="1"/></svg>
<svg class="i" style="left:510px;top:789px" width="13" height="15" viewBox="0 0 13 15"><path d="M0.500 3H12.500M4.500 3V1H8.500V3M2 3V14H11V3M5 6V11.500M8 6V11.500" fill="none" stroke="#c8c8cb" stroke-width="1.200"/></svg>

<!-- status bubble -->
<div class="a" style="left:156px;top:813px;width:300px;height:14px;background:#7fa9e4;border-radius:0 4px 0 0;font-size:9.500px;line-height:15px;color:#16233d;padding-left:4px;white-space:nowrap;letter-spacing:.07px">https://www.loom.com/share/7c33e80f4c7e4ab685be516e3765ca4b</div>

</body></html>
